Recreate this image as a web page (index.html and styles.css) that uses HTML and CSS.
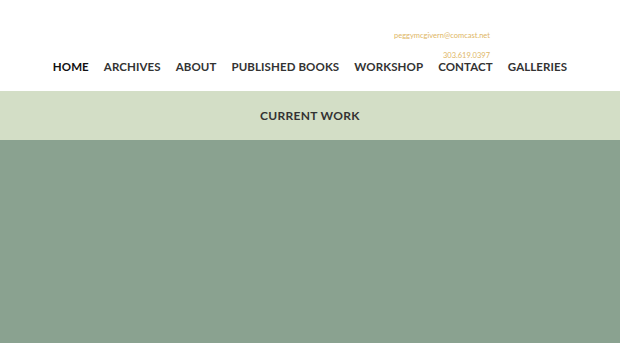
FILE: index.html
```html
<!DOCTYPE html>
<html lang="en">

<head>
    <meta charset="UTF-8">
    <meta name="viewport" content="width=device-width, initial-scale=1.0">
    <title>Peggy McGivern</title>
    <link rel="stylesheet" href="styles.css">
</head>

<body>
    <!-- Header -->
    <header>
        <div class="contact-info">
            <p class="email">peggymcgivern@comcast.net</p>
            <p class="phone">303.619.0397</p>
        </div>
        <nav class="main-nav">
            <a href="#" class="active">HOME</a>
            <a href="#">ARCHIVES</a>
            <a href="#">ABOUT</a>
            <a href="#">PUBLISHED BOOKS</a>
            <a href="#">WORKSHOP</a>
            <a href="#">CONTACT</a>
            <a href="#">GALLERIES</a>
        </nav>
    </header>

    <!-- Section Title -->
    <div class="section-title">
        <h2>CURRENT WORK</h2>
    </div>

    <!-- Gallery Area -->
    <main class="gallery"></main>
</body>

</html>
```

FILE: styles.css
```css
/* Global Styles */
body {
    font-family: Lato, "Open Sans", sans-serif;
    margin: 0;
    padding: 0;
    background-color: #8aa290;
    color: #333;
}

/* Header */
header {
    background: white;
    height: 91px;
    position: relative;
}

.contact-info {
    width: 360px;
    margin: 0 auto;
    padding-top: 31px;
    text-align: right;
    color: #deb665;
    font-size: 7.5px;
}

.contact-info p {
    margin: 0;
    line-height: 10px;
}

.contact-info .phone {
    margin-top: 10px;
}

.main-nav {
    position: absolute;
    left: 0;
    right: 0;
    top: 60px;
    display: flex;
    justify-content: center;
    gap: 15px;
}

.main-nav a {
    color: #333;
    text-decoration: none;
    font-size: 11.5px;
    font-weight: 700;
    letter-spacing: 0.1px;
}

.main-nav a.active {
    color: #111;
}

/* Section Title */
.section-title {
    background: #d3dec6;
    height: 49px;
    display: flex;
    align-items: center;
    justify-content: center;
}

.section-title h2 {
    margin: 0;
    font-size: 12px;
    font-weight: 700;
    letter-spacing: 0.3px;
    color: #333;
}

/* Gallery */
.gallery {
    height: 203px;
}
```
